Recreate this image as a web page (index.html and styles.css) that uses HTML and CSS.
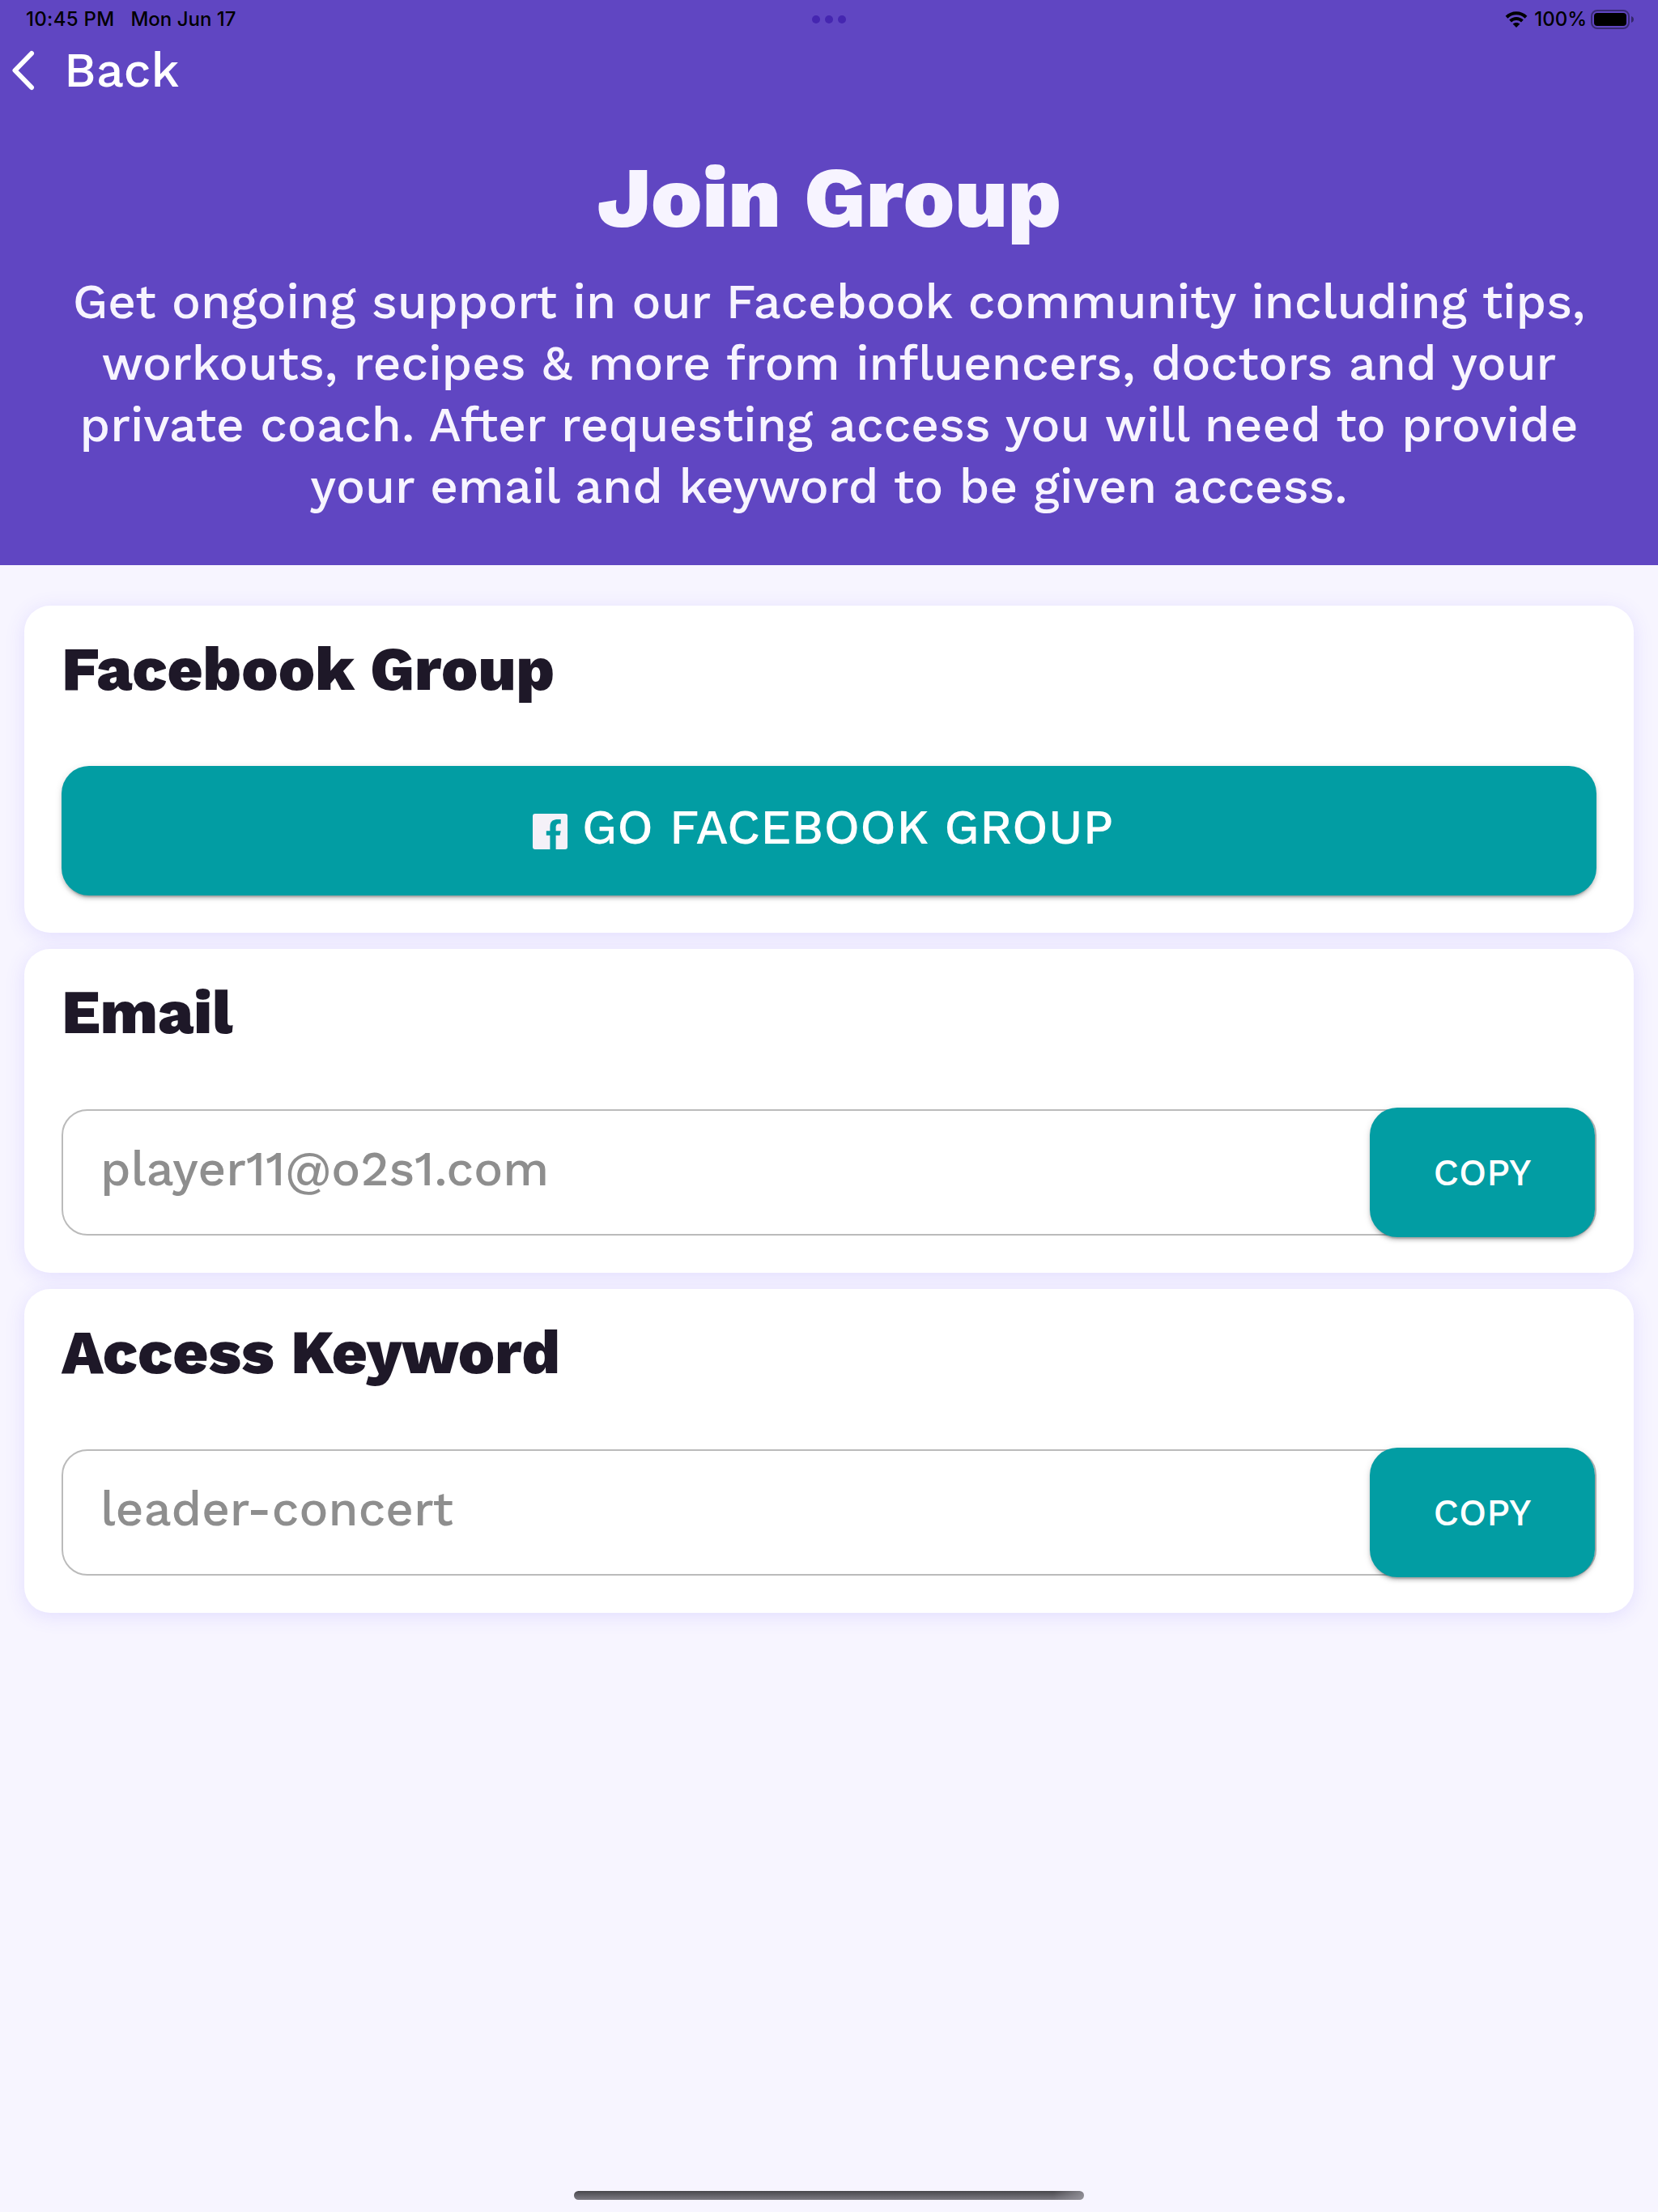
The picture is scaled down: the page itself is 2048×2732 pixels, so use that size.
FILE: index.html
```
<!DOCTYPE html>
<html lang="en">
<head>
    <meta charset="UTF-8">
    <meta name="viewport" content="width=device-width, initial-scale=1.0">
    <title>Join Group</title>
    <link rel="stylesheet" href="styles.css">
</head>
<body>
    <header>
        <div class="status-bar">
            <span class="time">10:45 PM</span>
            <span class="date">Mon Jun 17</span>
            <span class="dots"><i></i><i></i><i></i></span>
            <span class="status-right">
                <svg class="wifi" width="28" height="20" viewBox="0 0 28 20">
                    <path d="M2 7.2C8.8 0.6 19.2 0.6 26 7.2" fill="none" stroke="#000" stroke-width="4"/>
                    <path d="M6.6 12C10.8 8 17.2 8 21.4 12" fill="none" stroke="#000" stroke-width="4"/>
                    <path d="M14 20L9.6 15.6C12 13.3 16 13.3 18.4 15.6Z" fill="#000"/>
                </svg>
                <span class="percent">100%</span>
                <svg class="battery" width="54" height="24" viewBox="0 0 54 24">
                    <rect x="1" y="1" width="46" height="22" rx="7" fill="none" stroke="#000" stroke-opacity="0.4" stroke-width="2"/>
                    <rect x="4" y="4" width="40" height="16" rx="4" fill="#000"/>
                    <path d="M50 8C54 9.2 54 14.8 50 16Z" fill="#000" fill-opacity="0.45"/>
                </svg>
            </span>
        </div>

        <a class="back">
            <svg width="30" height="50" viewBox="0 0 30 50">
                <path d="M26 4L5.5 25L26 46" fill="none" stroke="#fff" stroke-width="6" stroke-linecap="round" stroke-linejoin="round"/>
            </svg>
            <span>Back</span>
        </a>

        <h1>Join Group</h1>
        <p class="intro">Get ongoing support in our Facebook community including tips, workouts, recipes &amp; more from influencers, doctors and your private coach. After requesting access you will need to provide your email and keyword to be given access.</p>
    </header>

    <main>
        <section class="card">
            <h2>Facebook Group</h2>
            <button class="btn btn-facebook" type="button">
                <svg width="43" height="44" viewBox="0 0 43 44">
                    <path fill="#f4f1f8" d="M3 0H40a3 3 0 0 1 3 3V41a3 3 0 0 1-3 3H28.6V26.7H33.6L34.7 21.3H28.6V17.5C28.6 14 29.5 12.4 32.5 12.4H34.7V7H31C24 7 21.4 10.5 21.4 16V21.3H16.8V26.7H21.4V44H3a3 3 0 0 1-3-3V3a3 3 0 0 1 3-3z"/>
                </svg>
                <span>GO FACEBOOK GROUP</span>
            </button>
        </section>

        <section class="card">
            <h2>Email</h2>
            <div class="field">
                <span class="value">player11@o2s1.com</span>
                <button class="btn btn-copy" type="button">COPY</button>
            </div>
        </section>

        <section class="card">
            <h2>Access Keyword</h2>
            <div class="field">
                <span class="value">leader-concert</span>
                <button class="btn btn-copy" type="button">COPY</button>
            </div>
        </section>
    </main>

    <div class="home-indicator"></div>
</body>
</html>
```
FILE: styles.css
```
* {
    box-sizing: border-box;
}

body {
    font-family: "Work Sans", Inter, sans-serif;
    font-weight: 500;
    margin: 0;
    min-height: 2732px;
    background-color: #f7f5ff;
    display: flex;
    flex-direction: column;
}

header {
    background: #6046c2;
    color: #f7f4ff;
    height: 698px;
}

/* status bar */
.status-bar {
    position: relative;
    display: flex;
    align-items: center;
    height: 48px;
    padding: 0 29px 0 32px;
    font-family: Inter, sans-serif;
    font-size: 24px;
    line-height: 48px;
    color: #000;
}

.time {
    letter-spacing: 0.3px;
}

.date {
    margin-left: 20px;
}

.dots {
    position: absolute;
    left: 50%;
    top: 19px;
    display: flex;
    gap: 6px;
    transform: translateX(-50%);
}

.dots i {
    width: 10px;
    height: 10px;
    border-radius: 50%;
    background: #4526b0;
}

.status-right {
    display: flex;
    align-items: center;
    margin-left: auto;
}

.percent {
    margin: 0 5px 0 8px;
}

.back {
    display: flex;
    align-items: center;
    height: 77px;
    padding-left: 13px;
    font-size: 60px;
    color: #fff;
}

.back span {
    margin-left: 36px;
}

h1 {
    margin: 59px 0 32px;
    font-size: 106px;
    font-weight: 800;
    line-height: 119px;
    text-align: center;
}

.intro {
    margin: 0;
    padding: 0 76px;
    font-size: 60px;
    line-height: 76px;
    text-align: center;
}

/* cards */
main {
    display: flex;
    flex-direction: column;
    gap: 20px;
    padding: 50px 30px 0;
}

.card {
    padding: 46px;
    background: #fff;
    border-radius: 32px;
    box-shadow: 0 4px 24px rgba(90, 70, 255, 0.13);
}

h2 {
    margin: 0 0 88px;
    font-size: 76px;
    font-weight: 800;
    line-height: 64px;
    color: #1e1828;
}

.btn {
    display: flex;
    align-items: center;
    justify-content: center;
    height: 160px;
    padding: 0;
    border: none;
    border-radius: 34px;
    background-color: #029da3;
    color: #fff;
    font-family: inherit;
    font-weight: 500;
    box-shadow: 0 6px 2px -4px rgba(0, 0, 0, 0.2), 0 4px 4px rgba(0, 0, 0, 0.14), 0 2px 10px rgba(0, 0, 0, 0.12);
}

.btn-facebook {
    width: 100%;
    padding: 0 15px 9px 0;
    font-size: 60px;
    letter-spacing: 0.15px;
}

.btn-facebook svg {
    margin: 10px 18px 0 0;
}

.field {
    display: flex;
    align-items: center;
    justify-content: space-between;
    height: 156px;
    padding-left: 46px;
    border: 2px solid #bbb;
    border-radius: 32px;
}

.value {
    padding-bottom: 9px;
    font-size: 60px;
    color: #8e8e8e;
}

/* slightly taller than the field it sits in */
.btn-copy {
    width: 278px;
    flex-shrink: 0;
    margin: -4px 0;
    font-size: 46px;
}

.home-indicator {
    width: 630px;
    height: 11px;
    margin: auto auto 15px;
    border-radius: 6px;
    background: linear-gradient(to right, transparent 94%, rgba(160, 158, 166, 0.7)), linear-gradient(#48474c, #7d7b83);
}
```
